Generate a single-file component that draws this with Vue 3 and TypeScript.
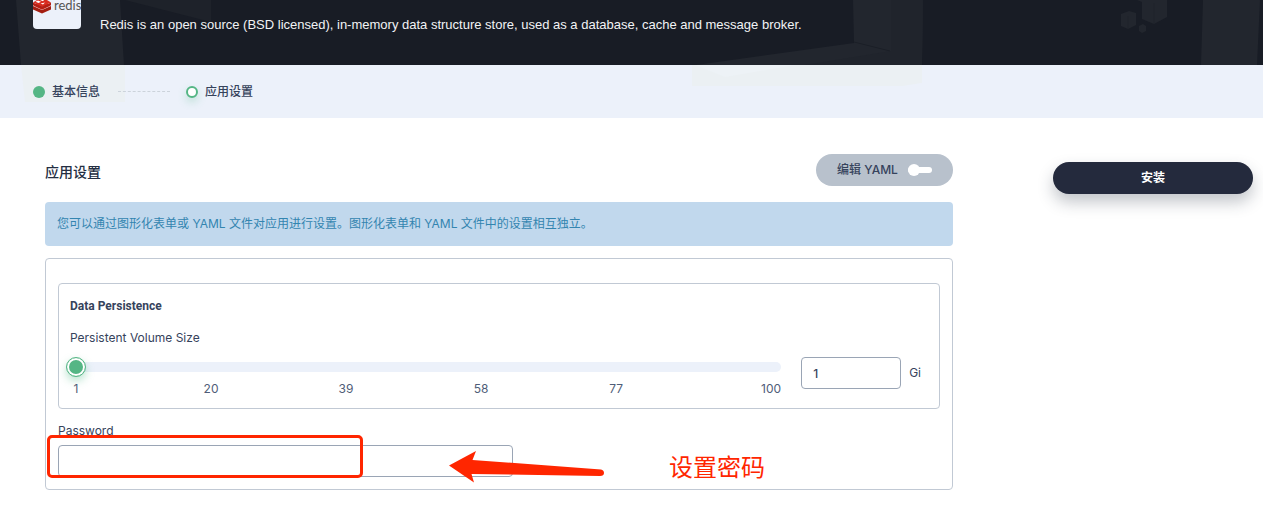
<script setup lang="ts">
import { ref } from 'vue'

const size = ref<number>(1)
const password = ref<string>('')
const yamlMode = ref<boolean>(false)
const ticks: number[] = [1, 20, 39, 58, 77, 100]
</script>

<template>
  <div class="page">
    <div class="top">
      <header class="banner">
        <div class="logo">
          <svg class="cube" viewBox="0 0 19 14" aria-hidden="true">
            <path d="M0 6 L9 10 L18 6 V9.400 L9 13.600 L0 9.400Z" fill="#a41e11" />
            <path d="M0 5.600 L9 2 L18 5.600 L9 9.800Z" fill="#d82c20" />
            <path d="M0 2.600 L9 6.600 L18 2.600 V5 L9 9.200 L0 5Z" fill="#b32015" />
            <path d="M0 2.400 L4 0 H14 L18 2.400 L9 6.400Z" fill="#d82c20" />
            <path d="M2.500 1.800 L5 .6 L8 1.800 L5.500 3Z M7 0 H11 L10 1.300Z M7.500 3.400 L12 2.500 L10 4.500Z" fill="#fff" />
          </svg>
          <span class="brand">redis</span>
        </div>
        <p class="description">Redis is an open source (BSD licensed), in-memory data structure store, used as a database, cache and message broker.</p>
      </header>

      <nav class="steps" aria-label="安装步骤">
        <span class="dot done"></span>
        <span class="step">基本信息</span>
        <span class="dash"></span>
        <span class="dot current"></span>
        <span class="step" aria-current="step">应用设置</span>
      </nav>

      <svg class="shapes" viewBox="0 0 1263 118" preserveAspectRatio="xMidYMin slice" aria-hidden="true">
        <g fill="#22262e">
          <path d="M16 0 H120 L124 65 H21Z" />
          <path d="M125 0 H211 V22Z" fill="#1e222a" />
          <path d="M853 0 H923 L922 65 H696 L854 43Z" />
          <path d="M1203 0 H1260 L1257 65 H1201Z" />
          <path d="M1121 14 L1129 11 L1136 13 V25 L1128 29 L1121 26Z" />
          <path d="M1137 0 H1167 V17 L1154 24 L1142 19 V2Z" />
          <path d="M1139 26 L1143 24 L1146 26 V31 L1142 33 L1139 31Z" />
        </g>
        <path d="M891 0 H923 L922 65 H805 L891 51Z" fill="#20242c" />
        <path d="M854 42 L890 51" fill="none" stroke="#1b1f27" />
        <path d="M1128 16 V29 M1154 3 V24" fill="none" stroke="#1f232b" />
        <path d="M21 65 H125 V102 H25Z" fill="#ebf0f3" />
        <path d="M692 65 H922 V83 L902 86 H692Z" fill="#ebf0f3" />
        <path d="M695 65 H795 L725 77Z" fill="#edf2f6" />
      </svg>
    </div>

    <main class="content">
      <section class="settings">
        <div class="heading">
          <h1>应用设置</h1>
          <button class="yaml" type="button" :aria-pressed="yamlMode" @click="yamlMode = !yamlMode">
            编辑 YAML
            <span class="switch" :class="{ on: yamlMode }"></span>
          </button>
        </div>

        <p class="notice">您可以通过图形化表单或 YAML 文件对应用进行设置。图形化表单和 YAML 文件中的设置相互独立。</p>

        <form class="panel" @submit.prevent>
          <fieldset class="group">
            <h2>Data Persistence</h2>
            <label class="caption" for="volume">Persistent Volume Size</label>
            <div class="volume">
              <div class="slider">
                <input id="volume" v-model.number="size" type="range" min="1" max="100" />
                <div class="ticks">
                  <span v-for="tick in ticks" :key="tick">{{ tick }}</span>
                </div>
              </div>
              <input v-model="size" class="box amount" type="text" aria-label="Persistent Volume Size (Gi)" />
              <span class="unit">Gi</span>
            </div>
          </fieldset>

          <div class="password">
            <label for="password">Password</label>
            <input id="password" v-model="password" class="box" type="password" />
            <div class="highlight"></div>
            <svg class="arrow" viewBox="0 0 156 34" aria-hidden="true">
              <path d="M0 15.5 L27 1 L23.500 10 L152 19.500 Q155 20 155 23 Q155 26 151 26 L22.500 24 L25 32.500Z" fill="#ff2600" />
            </svg>
            <span class="remark">设置密码</span>
          </div>
        </form>
      </section>

      <aside>
        <button class="install" type="button">安装</button>
      </aside>
    </main>
  </div>
</template>

<style>
body {
  margin: 0;
  background: #fff;
}
</style>

<style scoped>
.page,
.page button,
.page input {
  font-family: Inter, "Noto Sans CJK SC", sans-serif;
  font-size: 12px;
  line-height: 20px;
  color: #36435c;
}
.page *,
.page {
  box-sizing: border-box;
}
h1,
h2,
p {
  margin: 0;
}
.top {
  position: relative;
  isolation: isolate;
  background: #ecf1fa;
}
.shapes {
  position: absolute;
  inset: 0;
  z-index: -1;
  width: 100%;
  height: 100%;
}
.banner {
  display: flex;
  gap: 19px;
  height: 65px;
  padding-left: 33px;
  position: relative;
}
.banner::before {
  content: "";
  position: absolute;
  inset: 0;
  z-index: -2;
  background: #181c25;
}
.logo {
  display: flex;
  flex: none;
  width: 48px;
  height: 29px;
  background: #ecf1fa;
  border-radius: 0 0 4px 4px;
}
.cube {
  flex: none;
  width: 19px;
  height: 14px;
}
.brand {
  margin-left: 2px;
  font-family: Lato, sans-serif;
  font-size: 13px;
  line-height: 10px;
  color: #555;
}
.description {
  padding-top: 15px;
  font-family: "Liberation Sans", sans-serif;
  font-size: 13px;
  color: #f2f3f5;
}
.steps {
  display: flex;
  align-items: center;
  height: 53px;
  padding-left: 33px;
}
.dot {
  width: 12px;
  height: 12px;
  margin-right: 7px;
  border-radius: 50%;
}
.done {
  background: #55b685;
}
.current {
  background: #fff;
  border: 2px solid #55b685;
  box-shadow: 0 4px 8px rgba(85, 188, 138, 0.3);
}
.step {
  font-weight: 500;
}
.dash {
  width: 52px;
  margin: 0 16px 0 18px;
  border-top: 1px dashed #ccd3db;
}
.content {
  display: grid;
  grid-template-columns: minmax(0, 1fr) 200px;
  gap: 100px;
  padding: 36px 10px 18px 45px;
}
.heading {
  display: flex;
  justify-content: space-between;
  align-items: flex-end;
  margin-bottom: 16px;
}
h1 {
  font-size: 14px;
  font-weight: 500;
  line-height: 28px;
  color: #242e42;
}
.page .yaml {
  display: flex;
  align-items: center;
  justify-content: space-between;
  gap: 7px;
  min-width: 137px;
  height: 32px;
  padding: 0 21px;
  font-weight: 500;
  background: #b8c1cc;
  border: 0;
  border-radius: 16px;
}
.switch {
  display: flex;
  align-items: center;
  width: 24px;
  height: 6px;
  background: #fff;
  border-radius: 3px;
}
.switch::before {
  content: "";
  width: 12px;
  height: 12px;
  background: #fff;
  border-radius: 50%;
}
.switch.on {
  justify-content: flex-end;
}
.notice {
  padding: 12px;
  margin-bottom: 12px;
  color: #3385b0;
  background: #c1d8ed;
  border-radius: 4px;
}
.panel {
  padding: 24px 12px 12px;
  border: 1px solid #c1c9d4;
  border-radius: 4px;
}
.group {
  min-width: 0;
  margin: 0 0 12px;
  padding: 12px 18px 9px 11px;
  border: 1px solid #c1c9d4;
  border-radius: 4px;
}
h2 {
  margin-bottom: 12px;
  font-family: Roboto, sans-serif;
  font-size: 12px;
  font-weight: 700;
}
.caption {
  display: block;
  margin-bottom: 9px;
}
.volume {
  display: flex;
  align-items: flex-start;
  margin-left: -4px;
}
.slider {
  flex: 1;
  min-width: 0;
  margin-right: 20px;
}
.slider input {
  display: block;
  width: 100%;
  height: 20px;
  margin: 0 0 2px;
  appearance: none;
  background: none;
}
.slider input::-webkit-slider-runnable-track {
  height: 10px;
  background: #ecf1fa;
  border-radius: 5px;
}
.slider input::-webkit-slider-thumb {
  appearance: none;
  width: 20px;
  height: 20px;
  margin-top: -5px;
  background: #55b685;
  background-clip: padding-box;
  border: 1px solid #55b685;
  border-radius: 50%;
  box-shadow: inset 0 0 0 2px #fff, 0 4px 8px rgba(85, 188, 138, 0.4);
}
.ticks {
  display: grid;
  grid-template-columns: repeat(5, 1fr) 40px;
  color: #4f5d78;
}
.ticks span {
  width: 20px;
  text-align: center;
}
.ticks span:last-child {
  width: auto;
  text-align: right;
}
.page .box {
  height: 32px;
  padding: 0 11px;
  background: #fff;
  border: 1px solid #9aa5b5;
  border-radius: 4px;
  outline: none;
}
.page .amount {
  width: 100px;
  font-weight: 500;
}
.unit {
  padding: 6px 0 0 8px;
}
.password {
  position: relative;
}
.password label {
  display: block;
  margin-bottom: 4px;
}
.password input {
  display: block;
  width: 455px;
  max-width: 100%;
}
.highlight {
  position: absolute;
  top: 14px;
  left: -11px;
  width: 316px;
  height: 43px;
  border: 3px solid #ff2600;
  border-radius: 5px;
  pointer-events: none;
}
.arrow {
  position: absolute;
  top: 29px;
  left: 391px;
  width: 156px;
  height: 34px;
  pointer-events: none;
}
.remark {
  position: absolute;
  top: 31px;
  left: 611px;
  font-size: 24px;
  line-height: 32px;
  color: #ff2600;
}
.page .install {
  width: 100%;
  height: 32px;
  margin-top: 8px;
  font-weight: 700;
  color: #fff;
  background: #242a3d;
  border: 0;
  border-radius: 16px;
  box-shadow: 0 8px 16px rgba(36, 46, 66, 0.28);
}
</style>
